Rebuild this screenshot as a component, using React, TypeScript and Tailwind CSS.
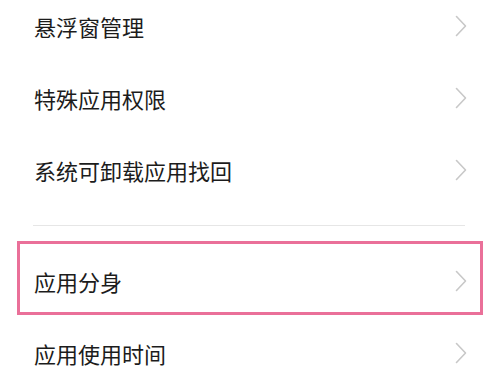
const items = ["悬浮窗管理", "特殊应用权限", "系统可卸载应用找回"];

function Chevron() {
  return (
    <svg width="12" height="22" viewBox="0 0 12 22" fill="none" className="shrink-0">
      <polyline points="1.5,1.5 10.5,11 1.5,20.5" stroke="#c8c8c8" strokeWidth="1.6" strokeLinecap="round" strokeLinejoin="round" />
    </svg>
  );
}

function Row({ label }: { label: string }) {
  return (
    <div className="flex h-[72px] items-center justify-between pl-[34px] pr-[33px]">
      <span className="text-[22px] leading-none text-[#1c1c1c]">{label}</span>
      <Chevron />
    </div>
  );
}

export default function App() {
  return (
    <div
      className="h-[375px] w-[500px] overflow-hidden bg-white"
      style={{ fontFamily: '"Noto Sans CJK SC", "Noto Sans", sans-serif' }}
    >
      <div className="-mt-[10px]">
        {items.map((label) => (
          <Row key={label} label={label} />
        ))}
        <div className="py-[19px] pl-[33px] pr-[35px]">
          <div className="h-px bg-[#e6e6e6]" />
        </div>
        <div className="relative">
          <Row label="应用分身" />
          <div className="pointer-events-none absolute -top-[4px] bottom-[2px] left-[17px] right-[17px] border-[3px] border-[#ea7099]" />
        </div>
        <Row label="应用使用时间" />
      </div>
    </div>
  );
}
